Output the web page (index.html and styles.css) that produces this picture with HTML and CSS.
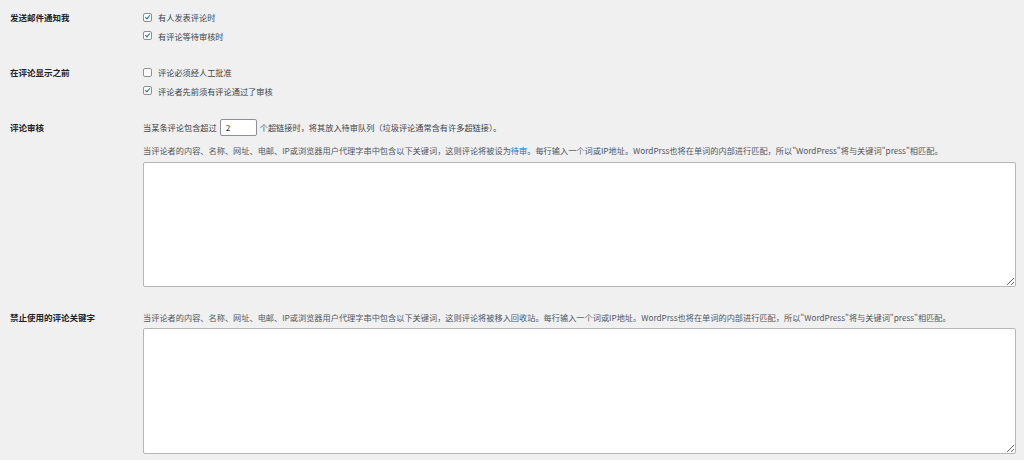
FILE: index.html
```html
<!DOCTYPE html>
<html lang="zh-CN">
<head>
  <meta charset="UTF-8" />
  <title>讨论设置</title>
  <link rel="stylesheet" href="styles.css">
</head>
<body>

<div class="form">

  <!-- 邮件通知 -->
  <div class="row">
    <div class="label">发送邮件通知我</div>
    <div class="field">
      <label class="check"><span class="box checked"></span>有人发表评论时</label>
      <label class="check"><span class="box checked"></span>有评论等待审核时</label>
    </div>
  </div>

  <!-- 显示之前 -->
  <div class="row">
    <div class="label">在评论显示之前</div>
    <div class="field">
      <label class="check"><span class="box"></span>评论必须经人工批准</label>
      <label class="check"><span class="box checked"></span>评论者先前须有评论通过了审核</label>
    </div>
  </div>

  <!-- 评论审核 -->
  <div class="row row-mod">
    <div class="label">评论审核</div>
    <div class="field">
      <div class="line">当某条评论包含超过<span class="num">2</span>个超链接时，将其放入待审队列（垃圾评论通常含有许多超链接）。</div>
      <p class="desc">当评论者的内容、名称、网址、电邮、IP或浏览器用户代理字串中包含以下关键词，这则评论将被设为<a href="#">待审</a>。每行输入一个词或IP地址。WordPrss也将在单词的内部进行匹配，所以"WordPress"将与关键词"press"相匹配。</p>
      <textarea class="keys keys-mod"></textarea>
    </div>
  </div>

  <!-- 禁止关键字 -->
  <div class="row row-block">
    <div class="label">禁止使用的评论关键字</div>
    <div class="field">
      <p class="desc first">当评论者的内容、名称、网址、电邮、IP或浏览器用户代理字串中包含以下关键词，这则评论将被移入回收站。每行输入一个词或IP地址。WordPrss也将在单词的内部进行匹配，所以"WordPress"将与关键词"press"相匹配。</p>
      <textarea class="keys keys-block"></textarea>
    </div>
  </div>

</div>

</body>
</html>
```

FILE: styles.css
```css
body {
  margin: 0;
  background: #f0f0f1;
  color: #3c434a;
  font-family: "Noto Sans CJK SC", "Noto Sans", sans-serif;
  font-size: 8.2px;
  overflow: hidden;
}

.form {
  padding: 0 8px 0 10px;
}

.row {
  display: flex;
  padding: 8px 0 10px;
}

.label {
  width: 133px;
  flex-shrink: 0;
  line-height: 19px;
  font-weight: bold;
  color: #1d2327;
  font-size: 8.5px;
}

.field {
  flex: 1;
}

.check {
  display: flex;
  align-items: center;
  height: 18.5px;
}

.box {
  width: 7px;
  height: 7px;
  border: 1px solid #8c8f94;
  border-radius: 2px;
  background: #fff;
  margin-right: 6px;
  position: relative;
}

.box.checked::after {
  content: "";
  position: absolute;
  left: 2px;
  top: 0px;
  width: 2px;
  height: 4px;
  border: solid #2271b1;
  border-width: 0 1.3px 1.3px 0;
  transform: rotate(40deg);
}

.line {
  line-height: 19px;
  display: flex;
  align-items: center;
}

.num {
  display: inline-block;
  box-sizing: border-box;
  width: 37px;
  height: 17px;
  line-height: 15px;
  margin: 0 3px;
  padding-left: 5px;
  border: 1px solid #8c8f94;
  border-radius: 2px;
  background: #fff;
  color: #2c3338;
}

.desc {
  margin: 4px 0 2px;
  line-height: 19px;
  color: #50575e;
}

.desc.first {
  margin: 0 0 1px;
}

.desc a {
  color: #2271b1;
  text-decoration: none;
}

.keys {
  display: block;
  box-sizing: border-box;
  width: 100%;
  border: 1px solid #b4b6b9;
  border-radius: 2px;
  background: #fff;
  margin: 0;
}

.keys-mod {
  height: 125px;
}

.row-mod {
  padding-bottom: 12px;
}

.row-block {
  padding-top: 9px;
}

.keys-block {
  height: 126px;
}
```
